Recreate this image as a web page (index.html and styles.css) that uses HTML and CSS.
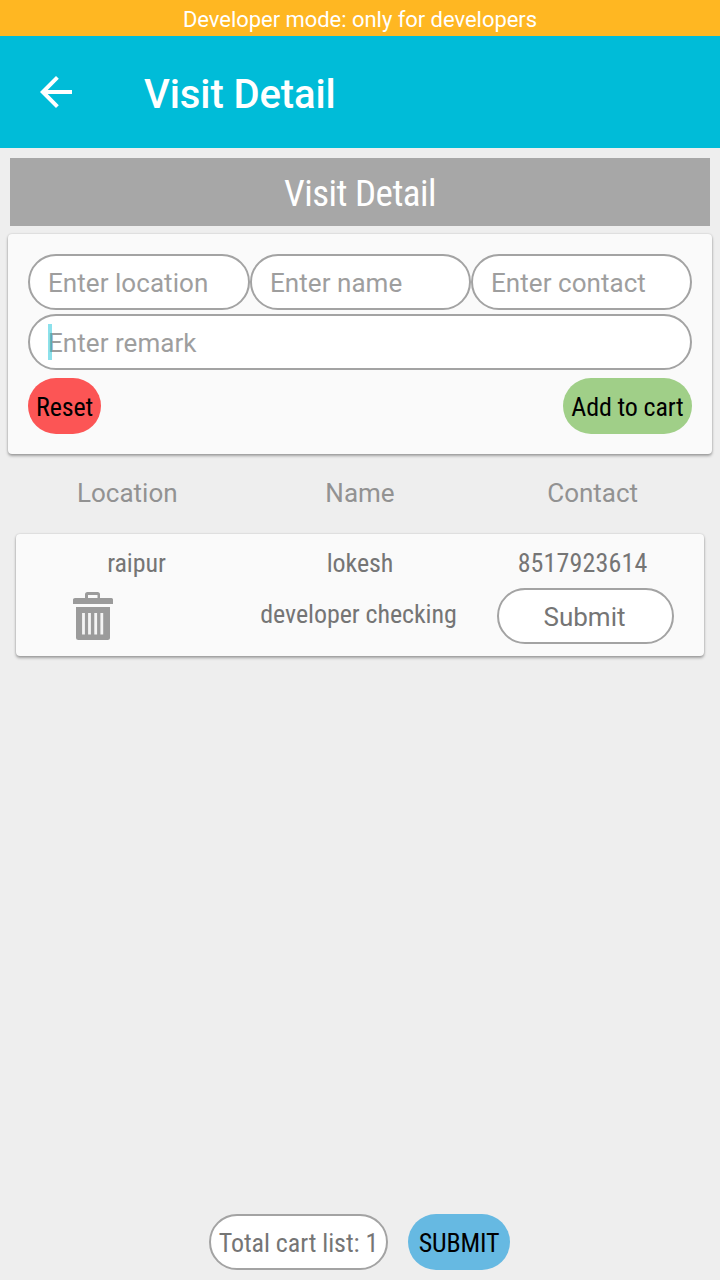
FILE: index.html
```html
<!DOCTYPE html>
<html lang="en">
<head>
<meta charset="utf-8">
<title>Visit Detail</title>
<link rel="stylesheet" href="styles.css">
</head>
<body>
<div class="screen">
  <div class="dev-banner">Developer mode: only for developers</div>
  <header class="app-bar">
    <svg class="back" viewBox="0 0 48 48" aria-label="Back"><path d="M40 22H15.7L26.8 10.8 24 8 8 24l16 16 2.8-2.8L15.7 26H40z" fill="#fff"/></svg>
    <h1 class="app-title">Visit Detail</h1>
  </header>
  <h2 class="section-title"><span class="cond">Visit Detail</span></h2>
  <section class="card form-card">
    <div class="field-row">
      <div class="field">Enter location</div>
      <div class="field">Enter name</div>
      <div class="field">Enter contact</div>
    </div>
    <div class="field remark"><span class="caret"></span>Enter remark</div>
    <div class="actions">
      <button class="pill reset"><span class="cond">Reset</span></button>
      <button class="pill add"><span class="cond">Add to cart</span></button>
    </div>
  </section>
  <div class="columns">
    <span>Location</span><span>Name</span><span>Contact</span>
  </div>
  <section class="card item-card">
    <div class="cell loc"><span class="cond">raipur</span></div>
    <div class="cell"><span class="cond">lokesh</span></div>
    <div class="cell contact"><span class="cond">8517923614</span></div>
    <div class="trash-cell">
      <svg class="trash" viewBox="0 0 40 50" aria-label="Delete">
        <path d="M2 7h10V3.500Q12 1 14.500 1h10Q27 1 27 3.500V7h11.500Q40 7 40 8.500V13H0V8.500Q0 7 2 7zM15 4V7h9.500V4z" fill="#9b9b9b" fill-rule="evenodd"/>
        <path d="M3 16h34v30.500Q37 49 34.500 49h-29Q3 49 3 46.500z" fill="#9b9b9b"/>
        <path d="M10.500 22v21.500M16.500 22v21.500M22.700 22v21.500M28.800 22v21.500" stroke="#f4f4f4" stroke-width="2.800" fill="none"/>
      </svg>
    </div>
    <div class="cell note"><span class="cond">developer checking</span></div>
    <button class="pill submit-row">Submit</button>
  </section>
  <footer class="footer">
    <div class="pill total"><span class="cond">Total cart list: 1</span></div>
    <button class="pill submit-all"><span class="cond">SUBMIT</span></button>
  </footer>
</div>
</body>
</html>
```
FILE: styles.css
```css
* { box-sizing: border-box; }
body { margin: 0; font-family: Roboto, sans-serif; font-size: 26px; color: #757575; background: #eee; }
.screen { width: 720px; height: 1280px; display: flex; flex-direction: column; }
.dev-banner { height: 36px; padding-top: 2px; background: #ffb722; color: #fff; font-size: 22px; line-height: 36px; letter-spacing: -.04px; text-align: center; }
.app-bar { height: 112px; display: flex; align-items: center; background: #00bcd8; padding-left: 32px; }
.back { width: 48px; height: 48px; }
.app-title { margin: 4px 0 0 64px; color: #fff; font-size: 40px; font-weight: 500; letter-spacing: -.1px; }
.section-title { margin: 10px 10px 0; height: 68px; padding-top: 1px; background: #a7a7a7; color: #fff; font-size: 37px; font-weight: 400; line-height: 69px; text-align: center; }
.section-title .cond { letter-spacing: -.5px; }
.cond { font-family: "Roboto Condensed", Roboto, sans-serif; font-stretch: 75%; font-weight: 430; letter-spacing: -.08px; white-space: nowrap; }
.contact .cond { letter-spacing: .14px; }
.contact { padding-right: 2px; }
.card { background: #fafafa; border-radius: 4px; box-shadow: 0 2px 3px rgba(0,0,0,.32), 0 0 2px rgba(0,0,0,.18); }
.form-card { margin: 8px 8px 0; height: 220px; padding: 20px; }
.field-row { display: grid; grid-template-columns: 222px 221px 221px; }
.field { height: 56px; border: 2px solid #a3a3a3; border-radius: 28px; background: #fff; padding: 1px 0 0 18px; line-height: 52px; letter-spacing: .05px; color: #9e9e9e; }
.remark { margin-top: 4px; position: relative; }
.caret { position: absolute; left: 18px; top: 8px; width: 4px; height: 36px; background: rgba(0,188,212,.45); }
.actions { display: flex; justify-content: space-between; margin-top: 8px; }
.pill { height: 56px; border: 0; border-radius: 28px; padding: 2px 0 0; font: inherit; line-height: 54px; text-align: center; white-space: nowrap; }
.reset { width: 73px; background: #fc5555; color: #000; }
.add { width: 129px; background: #a0cf88; color: #000; }
.pill .cond { font-weight: 450; letter-spacing: -.15px; }
.columns { display: grid; grid-template-columns: 1fr 1fr 1fr; padding: 0 11px; margin-top: 24px; height: 56px; line-height: 30px; text-align: center; color: #929292; }
.item-card { margin: 0 16px; height: 122px; padding: 0 12px; display: grid; grid-template-columns: 217px 230px 217px; grid-template-rows: 54px 56px; }
.cell { text-align: center; line-height: 58px; }
.trash-cell { padding: 3px 0 0 45px; }
.trash { width: 40px; height: 50px; display: block; }
.note { padding-right: 3px; line-height: 52px; }
.submit-row { width: 177px; margin-left: 22px; background: #fff; border: 2px solid #a3a3a3; padding-right: 2px; color: #757575; line-height: 50px; }
.footer { margin-top: auto; padding: 0 1px 10px 0; display: flex; justify-content: center; gap: 20px; }
.total { width: 179px; background: #fff; border: 2px solid #a3a3a3; line-height: 50px; }
.total .cond { font-weight: 400; letter-spacing: -.05px; }
.submit-all { width: 102px; background: #66b9e2; color: #000; }
```
